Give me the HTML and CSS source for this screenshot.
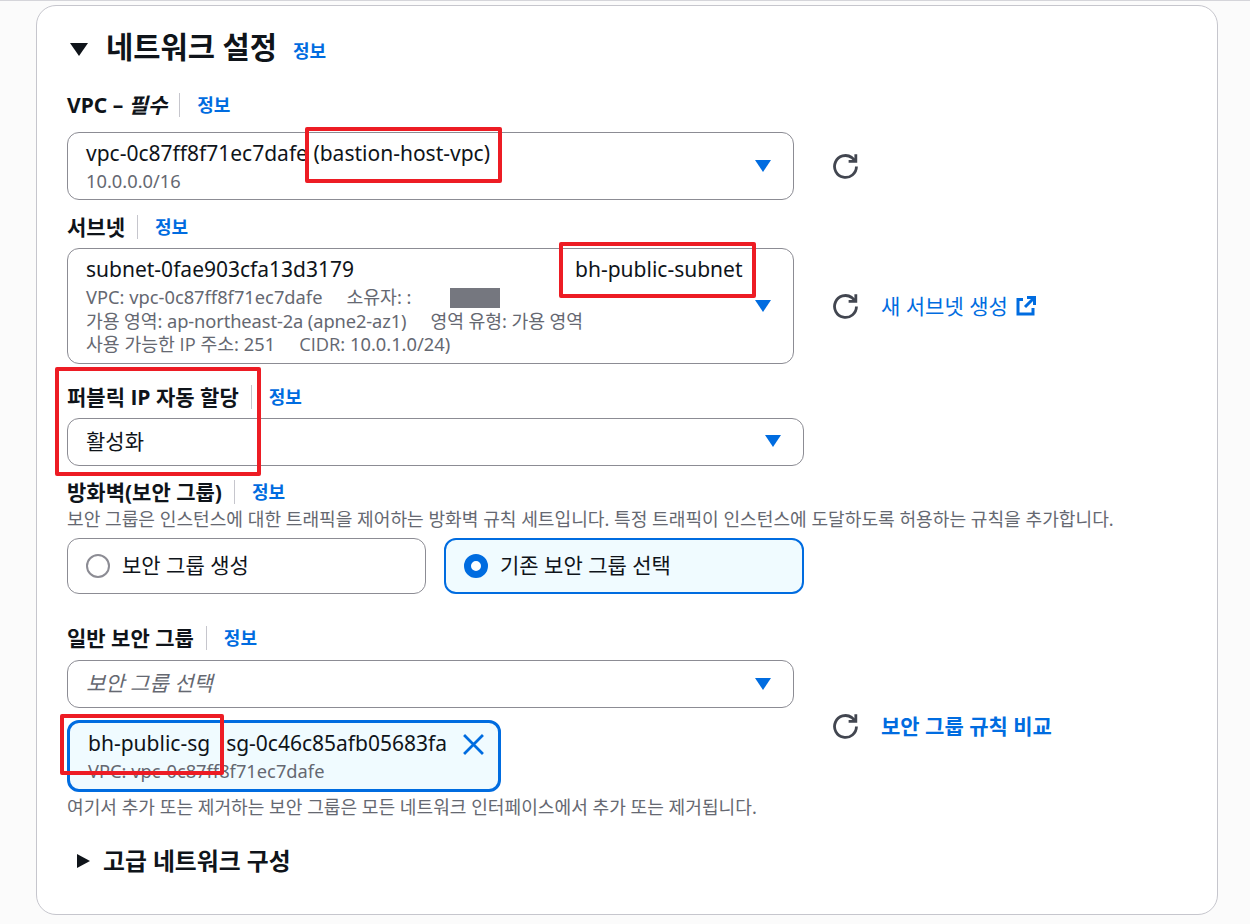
FILE: index.html
```html
<!DOCTYPE html>
<html lang="ko">
<head>
<meta charset="utf-8">
<title>네트워크 설정</title>
<link rel="stylesheet" href="styles.css">
</head>
<body>
<main class="card">
  <header class="head">
    <svg class="tri-down" viewBox="0 0 18 13"><path d="M0 0h18L9 13z"/></svg>
    <h2 class="title">네트워크 설정</h2>
    <a class="info">정보</a>
  </header>

  <div class="label l-vpc"><b>VPC – <i>필수</i></b><span class="sep"></span><a class="info">정보</a></div>
  <div class="row m15">
    <div class="select s-w h68">
      <div class="val">vpc-0c87ff8f71ec7dafe (bastion-host-vpc)</div>
      <div class="sub sub-one">10.0.0.0/16</div>
      <svg class="arrow" viewBox="0 0 16 12"><path d="M0 0h16L8 12z"/></svg>
    </div>
    <div class="aside">
      <svg class="refresh" viewBox="0 0 16 16"><path d="M15 8a7 7 0 1 1-3-5.75L14.4 4.4"/><path d="M14.6 .2v4.5h-4.6"/></svg>
    </div>
  </div>

  <div class="label m15"><b>서브넷</b><span class="sep"></span><a class="info">정보</a></div>
  <div class="row m9">
    <div class="select s-w h116">
      <div class="val"><span class="val-id">subnet-0fae903cfa13d3179</span><span>bh-public-subnet</span></div>
      <div class="sub s-line s-first">VPC: vpc-0c87ff8f71ec7dafe<span class="gap"></span>소유자: :</div>
      <div class="sub s-line tight">가용 영역: ap-northeast-2a (apne2-az1)<span class="gap"></span>영역 유형: 가용 영역</div>
      <div class="sub s-line">사용 가능한 <span class="plain-i">IP</span> 주소: 251<span class="gap"></span><span class="plain-i">CIDR</span>: 10.0.1.0/24)</div>
      <svg class="arrow arrow-b" viewBox="0 0 16 12"><path d="M0 0h16L8 12z"/></svg>
    </div>
    <div class="aside">
      <svg class="refresh" viewBox="0 0 16 16"><path d="M15 8a7 7 0 1 1-3-5.75L14.4 4.4"/><path d="M14.6 .2v4.5h-4.6"/></svg>
      <a class="link">새 서브넷 생성<svg class="ext" viewBox="0 0 20 20"><path d="M7 3.5H2v14.500h15V12"/><path d="M11 1.500h7.500V9"/><path d="M18 2L9 11"/></svg></a>
    </div>
  </div>

  <div class="label m21"><b>퍼블릭 <span class="plain-i">IP</span> 자동 할당</b><span class="sep"></span><a class="info">정보</a></div>
  <div class="select wide h48 m9">
    <div class="val">활성화</div>
    <svg class="arrow arrow-c" viewBox="0 0 16 12"><path d="M0 0h16L8 12z"/></svg>
  </div>

  <div class="label m14"><b>방화벽(보안 그룹)</b><span class="sep"></span><a class="info">정보</a></div>
  <p class="desc m5">보안 그룹은 인스턴스에 대한 트래픽을 제어하는 방화벽 규칙 세트입니다. 특정 트래픽이 인스턴스에 도달하도록 허용하는 규칙을 추가합니다.</p>
  <div class="tiles">
    <div class="tile"><span class="radio"></span><span class="tile-text">보안 그룹 생성</span></div>
    <div class="tile on"><span class="radio"></span><span class="tile-text">기존 보안 그룹 선택</span></div>
  </div>

  <div class="label m32"><b>일반 보안 그룹</b><span class="sep"></span><a class="info">정보</a></div>
  <div class="row m10">
    <div class="stack">
      <div class="select s-w h48">
        <div class="val ph">보안 그룹 선택</div>
        <svg class="arrow arrow-d" viewBox="0 0 16 12"><path d="M0 0h16L8 12z"/></svg>
      </div>
      <div class="chip">
        <div class="chip-main">
          <div class="val chip-val">bh-public-sg<span class="chip-id">sg-0c46c85afb05683fa</span></div>
          <div class="sub sub-one">VPC: vpc-0c87ff8f71ec7dafe</div>
        </div>
        <svg class="x" viewBox="0 0 20 20"><path d="M1 1l18 18M19 1L1 19"/></svg>
      </div>
    </div>
    <div class="aside">
      <svg class="refresh" viewBox="0 0 16 16"><path d="M15 8a7 7 0 1 1-3-5.75L14.4 4.4"/><path d="M14.6 .2v4.5h-4.6"/></svg>
      <a class="link strong">보안 그룹 규칙 비교</a>
    </div>
  </div>
  <p class="desc m5">여기서 추가 또는 제거하는 보안 그룹은 모든 네트워크 인터페이스에서 추가 또는 제거됩니다.</p>

  <div class="adv">
    <svg class="tri-right" viewBox="0 0 13 14"><path d="M0 0l13 7L0 14z"/></svg>
    <h3 class="adv-title">고급 네트워크 구성</h3>
  </div>

  <span class="redact"></span>
  <span class="mark m-a"></span>
  <span class="mark m-b"></span>
  <span class="mark m-c"></span>
  <span class="mark m-d"></span>
</main>
</body>
</html>
```

FILE: styles.css
```css
* { box-sizing: border-box; }
html, body { margin: 0; height: 924px; overflow: hidden; }
body {
  background: #fbfbfb;
  border-top: 1px solid #d5d5da;
  font-family: "Noto Sans", "Noto Sans CJK KR", sans-serif;
  color: #0f141a;
}
.card {
  position: relative;
  width: 1182px;
  height: 910px;
  margin: 4px 0 0 36px;
  padding: 28px 0 0 30px;
  background: #fff;
  border: 1px solid #c6c6cd;
  border-radius: 20px;
}
.head { display: flex; align-items: center; height: 30px; }
.tri-down { width: 18px; height: 13px; margin-left: 3px; fill: #0f141a; }
.title { margin: -4px 0 0 18px; font-size: 29.6px; font-weight: 700; line-height: 30px; }
.head .info { margin: 4px 0 0 16px; }
.info { font-size: 18px; font-weight: 700; color: #006ce0; line-height: 20px; }
.label { display: flex; align-items: center; height: 24px; font-size: 21px; line-height: 24px; }
.label i { font-style: italic; }
.plain-i { font-family: "Open Sans", "Noto Sans CJK KR", sans-serif; }
.sep { width: 1px; height: 24px; margin: 0 17px 0 12px; background: #c6c6cd; }
.l-vpc { margin-top: 29px; }
.m5 { margin-top: 5px; }
.m9 { margin-top: 9px; }
.m10 { margin-top: 10px; }
.m14 { margin-top: 14px; }
.m15 { margin-top: 15px; }
.m21 { margin-top: 21px; }
.m32 { margin-top: 32px; }
.row { display: flex; align-items: center; }
.stack { display: flex; flex-direction: column; gap: 12px; }
.select {
  position: relative;
  padding: 7px 18px 0;
  background: #fff;
  border: 1px solid #8c8c94;
  border-radius: 12px;
}
.s-w { width: 727px; }
.wide { width: 737px; }
.h68 { height: 68px; }
.h116 { height: 116px; }
.h48 { height: 48px; padding-top: 9px; }
.val { font-size: 21px; line-height: 26px; color: #0f141a; white-space: nowrap; }
.val-id { display: inline-block; width: 489px; }
.ph { color: #656871; font-style: italic; }
.sub { font-size: 18.3px; line-height: 26px; color: #656871; white-space: nowrap; }
.sub-one { margin-top: 2px; }
.s-line { line-height: 23.5px; }
.s-first { margin-top: 3px; }
.tight { letter-spacing: -0.1px; }
.gap { display: inline-block; width: 24px; }
.arrow { position: absolute; top: 27px; right: 22px; width: 16px; height: 12px; fill: #006ce0; }
.arrow-b { top: 51px; }
.arrow-c { top: 16px; }
.arrow-d { top: 17px; }
.aside { display: flex; align-items: center; margin-left: 39px; }
.refresh { width: 25px; height: 25px; fill: none; stroke: #424650; stroke-width: 1.8; }
.link { display: inline-flex; align-items: center; margin-left: 23px; font-size: 21px; line-height: 24px; color: #006ce0; }
.strong { font-weight: 700; }
.ext { width: 20px; height: 20px; margin-left: 8px; fill: none; stroke: #006ce0; stroke-width: 3; }
.desc { margin-bottom: 0; font-size: 18.12px; line-height: 20px; color: #656871; white-space: nowrap; }
.tiles { display: flex; gap: 18px; margin-top: 9px; }
.tile {
  display: flex;
  align-items: center;
  width: 359px;
  height: 56px;
  padding-left: 18px;
  font-size: 21px;
  border: 1px solid #8c8c94;
  border-radius: 12px;
}
.tile-text { margin-top: -4px; }
.tile.on { width: 360px; padding-left: 18px; background: #f0fbff; border: 2px solid #006ce0; }
.radio { width: 24px; height: 24px; margin-right: 12px; border: 2px solid #8c8c94; border-radius: 50%; background: #fff; }
.on .radio { width: 24px; margin-right: 12px; border: 7px solid #006ce0; }
.chip {
  display: flex;
  justify-content: space-between;
  width: 434px;
  height: 72px;
  padding: 7px 14px 0 18px;
  background: #f0fbff;
  border: 3px solid #006ce0;
  border-radius: 12px;
}
.chip-val { display: flex; }
.chip-id { margin-left: 16px; }
.x { width: 21px; height: 21px; margin-top: 4px; fill: none; stroke: #006ce0; stroke-width: 2.6; }
.adv { display: flex; align-items: center; height: 30px; margin-top: 29px; }
.tri-right { width: 13px; height: 14px; margin-left: 10px; fill: #0f141a; }
.adv-title { margin: 0 0 0 13px; font-size: 23.8px; font-weight: 700; line-height: 30px; }
.redact { position: absolute; left: 413px; top: 282px; width: 50px; height: 20px; background: #75777f; }
.mark { position: absolute; border: 4px solid #ed1c24; border-radius: 2px; }
.m-a { left: 268px; top: 121px; width: 197px; height: 56px; }
.m-b { left: 522px; top: 236px; width: 197px; height: 56px; }
.m-c { left: 18px; top: 361px; width: 206px; height: 109px; }
.m-d { left: 23px; top: 708px; width: 164px; height: 61px; }
```
